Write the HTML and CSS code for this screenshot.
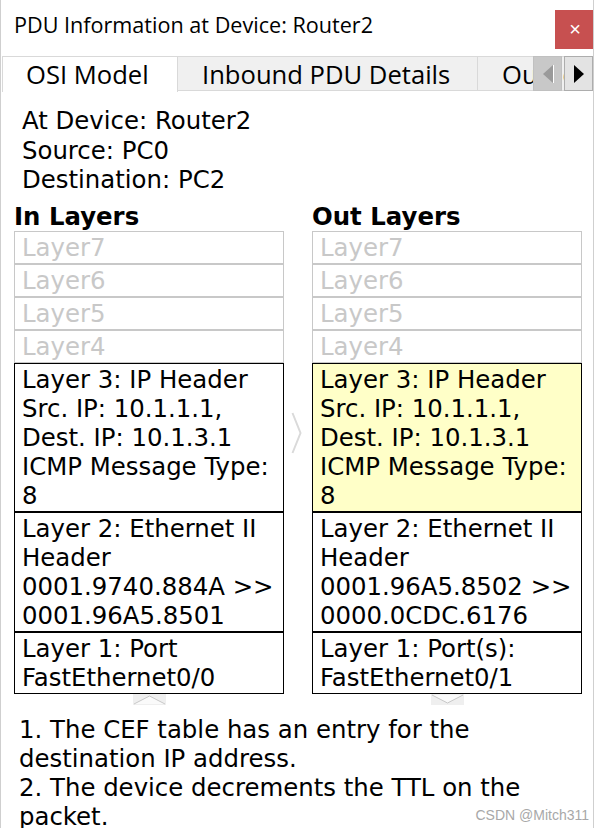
FILE: index.html
```html
<!DOCTYPE html>
<html>
<head>
<meta charset="utf-8">
<link rel="stylesheet" href="styles.css">
</head>
<body>
<div class="win">
  <div class="titlebar">
    <span class="title">PDU Information at Device: Router2</span>
    <div class="close">×</div>
  </div>
  <div class="tabbar">
    <div class="tab active">OSI Model</div>
    <div class="tab">Inbound PDU Details</div>
    <div class="tab">Outbound PDU Details</div>
    <div class="scroll">
      <div class="sbtn sleft"><svg width="14" height="20" viewBox="0 0 14 20"><polygon points="12,1 2,10 12,19" fill="#9a9a9a"/><line x1="12.5" y1="1" x2="12.5" y2="19" stroke="#fff" stroke-width="1"/></svg></div>
      <div class="sbtn sright"><svg width="14" height="20" viewBox="0 0 14 20"><polygon points="2,1 12,10 2,19" fill="#000"/></svg></div>
    </div>
  </div>
  <div class="info">
    <div>At Device: Router2</div>
    <div>Source: PC0</div>
    <div>Destination: PC2</div>
  </div>
  <div class="layers">
    <div class="col">
      <div class="head">In Layers</div>
      <div class="box dim">Layer7</div>
      <div class="box dim">Layer6</div>
      <div class="box dim">Layer5</div>
      <div class="box dim">Layer4</div>
      <div class="box">Layer 3: IP Header<br>Src. IP: 10.1.1.1,<br>Dest. IP: 10.1.3.1<br>ICMP Message Type:<br>8</div>
      <div class="box">Layer 2: Ethernet II<br>Header<br>0001.9740.884A &gt;&gt;<br>0001.96A5.8501</div>
      <div class="box">Layer 1: Port<br>FastEthernet0/0</div>
      <div class="chev"><svg width="33" height="11" viewBox="0 0 33 11"><rect x="0" y="0" width="33" height="11" fill="#efefef"/><polygon points="1,10 16.5,2 32,10" fill="#fafafa"/><polyline points="1,10 16.5,2 32,10" fill="none" stroke="#c8c8c8" stroke-width="1"/></svg></div>
    </div>
    <div class="mid">
      <svg width="11" height="42" viewBox="0 0 11 42"><polyline points="1.5,1 9.5,21 1.5,41" fill="none" stroke="#dadada" stroke-width="2"/></svg>
    </div>
    <div class="col">
      <div class="head">Out Layers</div>
      <div class="box dim">Layer7</div>
      <div class="box dim">Layer6</div>
      <div class="box dim">Layer5</div>
      <div class="box dim">Layer4</div>
      <div class="box hl">Layer 3: IP Header<br>Src. IP: 10.1.1.1,<br>Dest. IP: 10.1.3.1<br>ICMP Message Type:<br>8</div>
      <div class="box">Layer 2: Ethernet II<br>Header<br>0001.96A5.8502 &gt;&gt;<br>0000.0CDC.6176</div>
      <div class="box">Layer 1: Port(s):<br>FastEthernet0/1</div>
      <div class="chev"><svg width="33" height="11" viewBox="0 0 33 11"><rect x="0" y="0" width="33" height="11" fill="#efefef"/><polygon points="1,1 16.5,9 32,1" fill="#fafafa"/><polyline points="1,1 16.5,9 32,1" fill="none" stroke="#c8c8c8" stroke-width="1"/></svg></div>
    </div>
  </div>
  <div class="notes">
    1. The CEF table has an entry for the destination IP address.<br>
    2. The device decrements the TTL on the packet.
  </div>
  <div class="watermark">CSDN @Mitch311</div>
</div>
</body>
</html>
```

FILE: styles.css
```css
html, body {
  margin: 0;
  padding: 0;
  background: #fff;
}
.win {
  position: relative;
  width: 594px;
  height: 828px;
  box-sizing: border-box;
  border-left: 1px solid #cfcfcf;
  border-right: 1px solid #cfcfcf;
  overflow: hidden;
  font-family: "DejaVu Sans", Verdana, sans-serif;
  font-size: 24.4px;
  color: #000;
}
.titlebar {
  height: 56px;
  display: flex;
  align-items: flex-start;
  justify-content: space-between;
}
.title {
  font-family: "Open Sans", "Noto Sans", sans-serif;
  font-size: 21.6px;
  margin: 10px 0 0 13px;
  line-height: 30px;
}
.close {
  width: 40px;
  height: 39px;
  margin-top: 10px;
  margin-right: -2px;
  background: #c75050;
  color: #fff;
  font-family: "Liberation Sans", Arial, sans-serif;
  font-size: 20px;
  display: flex;
  align-items: center;
  justify-content: center;
}
.tabbar {
  position: relative;
  height: 36px;
  display: flex;
  padding-left: 1px;
  overflow: hidden;
  font-family: "Open Sans", "Noto Sans", sans-serif;
  font-size: 25.6px;
}
.tab {
  flex: none;
  height: 35px;
  line-height: 35px;
  box-sizing: border-box;
  background: #f0f0f0;
  border: 1px solid #d9d9d9;
  border-left: none;
  padding: 0 24px;
  white-space: nowrap;
}
.tab.active {
  background: #fff;
  border-bottom: none;
  border-left: 1px solid #d9d9d9;
  height: 36px;
  width: 176px;
  padding-left: 23px;
}
.tab:nth-child(2) {
  width: 300px;
}
.scroll {
  position: absolute;
  right: 0;
  top: 0;
  display: flex;
  gap: 2px;
}
.sbtn {
  width: 29px;
  height: 35px;
  box-sizing: border-box;
  display: flex;
  align-items: center;
  justify-content: center;
}
.sleft {
  background: #c8c8c8;
  border: 1px solid #c0c0c0;
}
.sright {
  background: #e3e3e3;
  border: 1px solid #adadad;
}
.info {
  padding: 14px 0 0 21px;
  line-height: 29.5px;
}
.layers {
  display: flex;
  padding-left: 13px;
  margin-top: 7px;
}
.col {
  width: 270px;
  display: flex;
  flex-direction: column;
}
.head {
  font-weight: bold;
  height: 29px;
  line-height: 29px;
}
.box {
  border: 1px solid #000;
  padding: 1px 0 1px 7px;
  line-height: 29px;
  white-space: nowrap;
}
.box.dim {
  border-color: #c8c8c8;
  color: #c8c8c8;
}
.box.hl {
  background: #ffffc8;
}
.mid {
  width: 28px;
  display: flex;
  justify-content: center;
  padding-top: 210px;
  box-sizing: border-box;
}
.mid svg {
  margin-left: -4px;
}
.chev {
  height: 21px;
  display: flex;
  justify-content: center;
}
.notes {
  padding-left: 18px;
  line-height: 29px;
  width: 540px;
}
.watermark {
  position: absolute;
  right: 4px;
  bottom: 5px;
  font-family: "Liberation Sans", Arial, sans-serif;
  font-size: 14px;
  color: #a8a8a8;
}
```
